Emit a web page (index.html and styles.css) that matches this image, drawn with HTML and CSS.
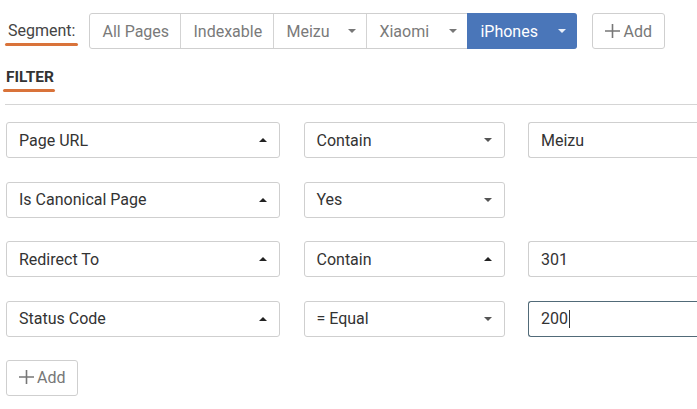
FILE: index.html
```html
<!DOCTYPE html>
<html>
<head>
<meta charset="utf-8">
<link rel="stylesheet" href="styles.css">
</head>
<body>
<div class="page">
  <div class="segment-bar">
    <span class="segment-label">Segment:</span>
    <div class="tabs">
      <span class="tab w-all">All Pages</span>
      <span class="tab w-idx">Indexable</span>
      <span class="tab w-meizu">Meizu<span class="caret down"></span></span>
      <span class="tab w-xiaomi">Xiaomi<span class="caret down"></span></span>
      <span class="tab w-iphones active">iPhones<span class="caret down"></span></span>
    </div>
    <span class="btn-add top"><svg class="plus" width="15" height="14" viewBox="0 0 15 14"><path d="M0 7H15M7.5 0V14" stroke="#777" stroke-width="1.6" fill="none"/></svg>Add</span>
  </div>
  <div class="filter-head"><span class="filter-title">FILTER</span></div>
  <div class="rows">
    <div class="row">
      <div class="select">Page URL<span class="caret up"></span></div>
      <div class="select">Contain<span class="caret down"></span></div>
      <div class="input">Meizu</div>
    </div>
    <div class="row">
      <div class="select">Is Canonical Page<span class="caret up"></span></div>
      <div class="select">Yes<span class="caret down"></span></div>
      <div></div>
    </div>
    <div class="row">
      <div class="select">Redirect To<span class="caret up"></span></div>
      <div class="select">Contain<span class="caret up"></span></div>
      <div class="input">301</div>
    </div>
    <div class="row">
      <div class="select">Status Code<span class="caret up"></span></div>
      <div class="select">= Equal<span class="caret down"></span></div>
      <div class="input focus">200<span class="cursor"></span></div>
    </div>
  </div>
  <span class="btn-add bottom"><svg class="plus" width="15" height="14" viewBox="0 0 15 14"><path d="M0 7H15M7.5 0V14" stroke="#777" stroke-width="1.6" fill="none"/></svg>Add</span>
</div>
</body>
</html>
```
FILE: styles.css
```css
html, body { margin: 0; padding: 0; background: #fff; }
body { font-family: Roboto, "Liberation Sans", sans-serif; font-size: 16px; color: #333; overflow: hidden; width: 697px; height: 409px; }
.page { padding: 13px 0 0 0; }
.segment-bar { display: flex; align-items: center; height: 36px; padding-left: 8px; }
.segment-label { position: relative; color: #444; font-size: 16px; margin-right: 14px; line-height: 36px; }
.segment-label::after { content: ""; position: absolute; left: -3px; right: -3px; bottom: 3px; height: 3px; background: #d9733a; border-radius: 2px; }
.tabs { display: flex; height: 36px; border: 1px solid #cfcfcf; border-radius: 3px; box-sizing: border-box; }
.tab { display: flex; align-items: center; justify-content: space-between; box-sizing: border-box; color: #7a7a7a; padding: 0 10px 0 12px; border-left: 1px solid #d3d3d3; }
.tab:first-child { border-left: none; }
.w-all { width: 90px; }
.w-idx { width: 93px; }
.w-meizu { width: 93px; }
.w-xiaomi { width: 101px; }
.w-iphones { width: 110px; }
.tab.active { background: #4a76b9; color: #fff; border-left: none; margin: -1px -1px -1px 0; height: 36px; padding-right: 11px; padding-left: 13px; border-radius: 0 3px 3px 0; }
.caret { display: inline-block; width: 0; height: 0; border-left: 4.5px solid transparent; border-right: 4.5px solid transparent; }
.caret.down { border-top: 4.5px solid #555; }
.caret.up { border-bottom: 4.5px solid #222; }
.tab .caret.down { border-top-color: #777; }
.tab.active .caret.down { border-top-color: #eaf0fa; }
.btn-add { display: inline-flex; align-items: center; height: 36px; box-sizing: border-box; border: 1px solid #cfcfcf; border-radius: 3px; color: #777; padding: 0 12px 0 12px; }
.btn-add.top { margin-left: 15px; }
.plus { margin-right: 3px; margin-top: -1px; }
.filter-head { margin: 18px 0 0 5px; padding: 0 0 17px 0; border-bottom: 1px solid #d5d5d5; }
.filter-title { position: relative; display: inline-block; font-weight: 700; font-size: 15.5px; color: #333; margin-left: 1px; line-height: 20px; }
.filter-title::after { content: ""; position: absolute; left: -3px; right: -1px; bottom: -5px; height: 3px; background: #d9733a; border-radius: 2px; }
.rows { padding: 17px 0 0 6px; display: flex; flex-direction: column; gap: 23.5px; }
.row { display: grid; grid-template-columns: 274px 201px 169px; column-gap: 23.5px; height: 36px; }
.select, .input { box-sizing: border-box; height: 36px; border: 1px solid #cfcfcf; border-radius: 3px; display: flex; align-items: center; padding: 0 12px; color: #333; }
.select { justify-content: space-between; padding-right: 12px; }
.input { border-right: none; border-radius: 3px 0 0 3px; }
.input.focus { border-color: #516a78; }
.cursor { display: inline-block; width: 1px; height: 18px; background: #333; margin-left: 1px; }
.btn-add.bottom { margin: 23px 0 0 6px; padding: 0 12px; }
```
